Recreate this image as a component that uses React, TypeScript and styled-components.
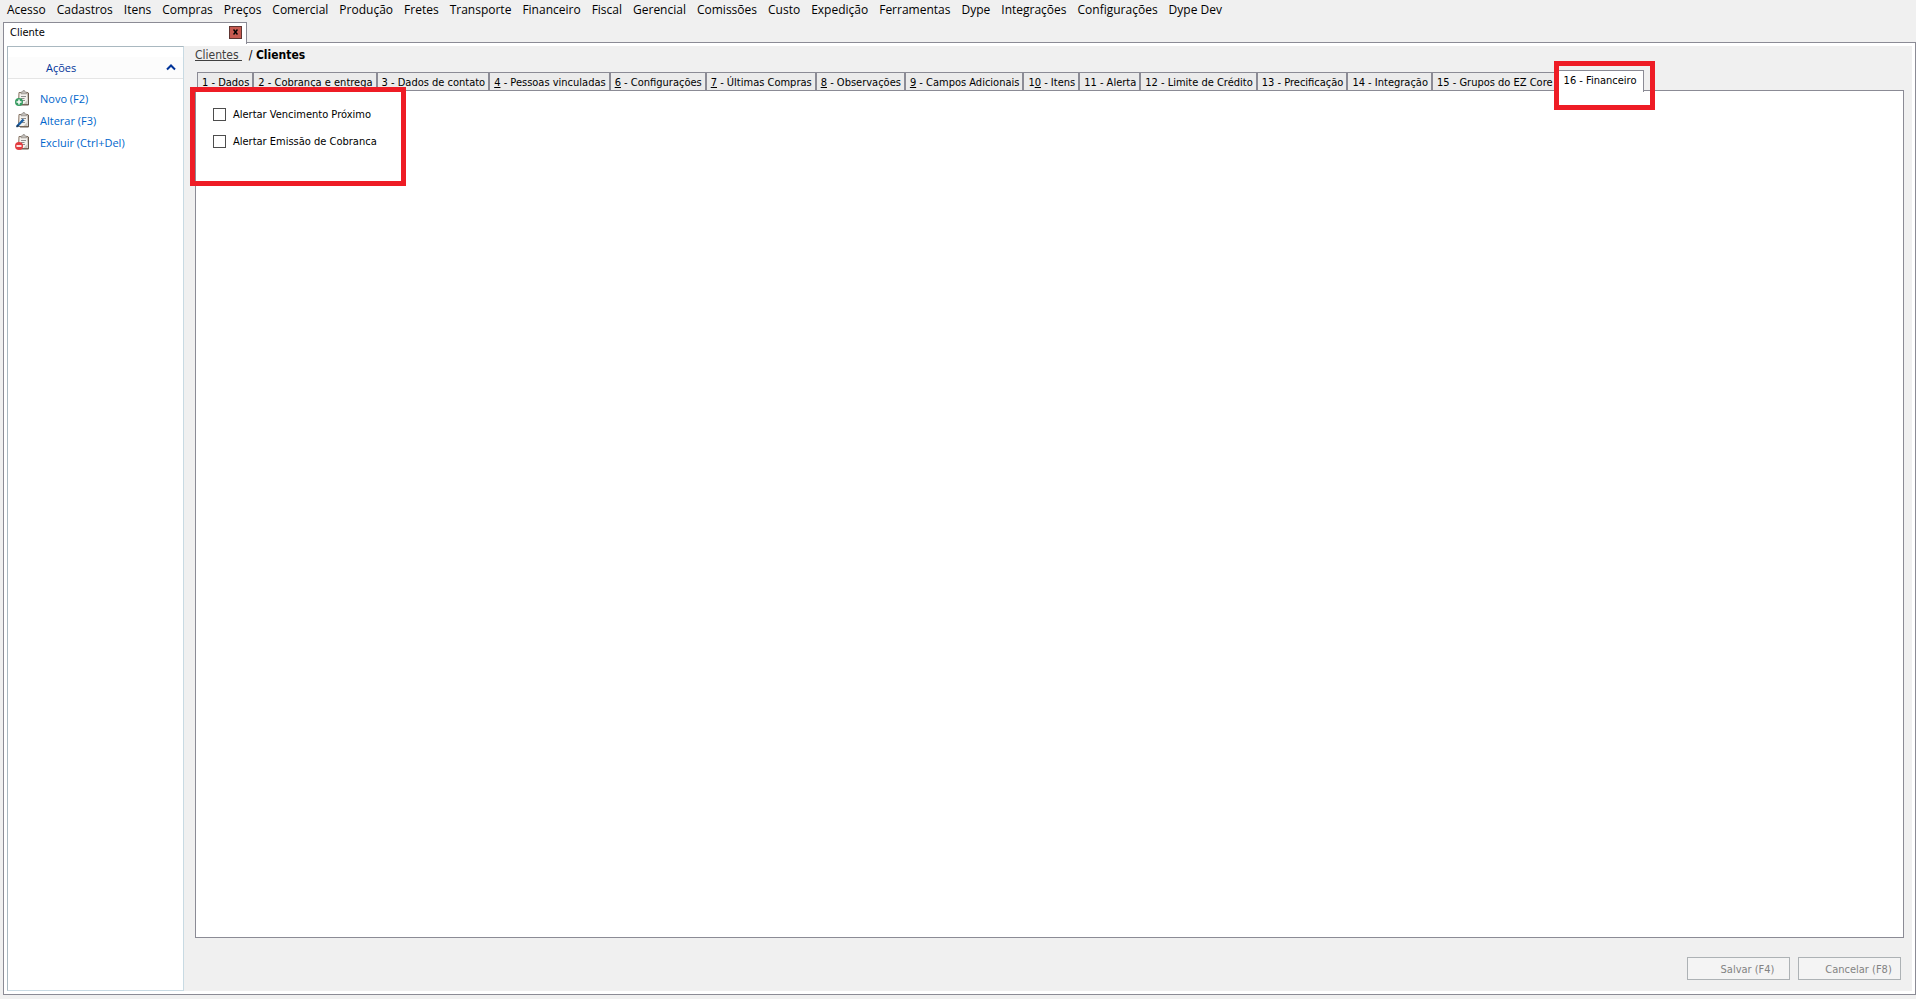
import React from "react";
import styled, { createGlobalStyle, css } from "styled-components";

const line = "#8b8b95";
const face = "#f0f0f0";
const uiFont = `"Open Sans", "Noto Sans", sans-serif`;
const formFont = `"DejaVu Sans Condensed", "DejaVu Sans", sans-serif`;

const GlobalStyle = createGlobalStyle`
  *, *::before, *::after { box-sizing: border-box; }
  body { margin: 0; background: ${face}; color: #000; font: 12px/16px ${uiFont}; }
`;

const Page = styled.div`
  display: flex;
  flex-direction: column;
  min-height: 100vh;
  padding: 0 0 4px 3px;
`;

const MenuBar = styled.nav`
  display: flex;
  align-items: flex-start;
  gap: 11px;
  height: 22px;
  padding: 2px 4px;
  white-space: nowrap;
`;

const MenuItem = styled.button`
  padding: 0;
  border: 0;
  background: none;
  color: inherit;
  font: inherit;
`;

const DocumentTab = styled.div`
  position: relative;
  z-index: 1;
  display: flex;
  align-items: center;
  justify-content: space-between;
  width: 244px;
  height: 22px;
  margin-bottom: -2px;
  padding: 0 4px 3px 6px;
  border: 1px solid ${line};
  border-bottom: 0;
  background: #fff;
  font: 11px/15px ${formFont};
`;

const CloseButton = styled.button`
  display: grid;
  place-items: center;
  width: 13px;
  height: 13px;
  padding: 0;
  border: 1px solid #5f3531;
  background: #c75a50;
`;

const Frame = styled.div`
  flex: 1;
  display: flex;
  padding: 3px;
  border: 1px solid ${line};
  background: #fff;
`;

const Sidebar = styled.aside`
  flex: none;
  width: 177px;
  padding-top: 10px;
  border: 1px solid #c8dae3;
  border-top-color: #a9b8c0;
  border-left-color: #a9b8c0;
  background: #fff;
`;

const GroupHeader = styled.button`
  display: flex;
  align-items: center;
  justify-content: space-between;
  width: 100%;
  height: 22px;
  padding: 0 7px 0 38px;
  border: 0;
  border-bottom: 1px solid #e5e5e5;
  background: #fcfcfc;
  color: #003399;
  font: 11px/16px ${uiFont};
`;

const ActionList = styled.div`
  display: flex;
  flex-direction: column;
  padding: 9px 7px;
`;

const Action = styled.button`
  display: flex;
  align-items: center;
  gap: 9px;
  height: 22px;
  padding: 0;
  border: 0;
  background: none;
  color: #0066cc;
  font: 11px/16px ${uiFont};
`;

const ActionIcon = styled.svg`
  flex: none;
  margin-bottom: 2px;
`;

const Content = styled.main`
  flex: 1;
  display: flex;
  flex-direction: column;
  min-width: 0;
  padding: 1px 8px 11px 11px;
  background: ${face};
  font: 11px/15px ${formFont};
`;

const Breadcrumb = styled.div`
  height: 23px;
  font-size: 12px;
  line-height: 16px;
  white-space: pre;
  a { color: #404040; }
`;

const TabStrip = styled.div`
  position: relative;
  z-index: 1;
  display: flex;
  align-items: flex-end;
  height: 21px;
  margin-bottom: -1px;
  padding-left: 2px;
`;

const Tab = styled.button<{ $active?: boolean }>`
  position: relative;
  flex: none;
  height: 19px;
  padding: 2px 3px 0 4px;
  border: 1px solid ${line};
  background: #ebebeb;
  color: #000;
  font: inherit;
  white-space: nowrap;
  ${(p) =>
    p.$active &&
    css`
      align-self: flex-start;
      height: 22px;
      margin-left: -2px;
      padding: 0 7px 3px 8px;
      border-bottom: 0;
      background: #fff;
    `}
`;

const TabPanel = styled.section`
  position: relative;
  flex: 1;
  display: flex;
  flex-direction: column;
  align-items: flex-start;
  gap: 12px;
  padding: 16px 17px;
  border: 1px solid ${line};
  background: #fff;
`;

const CheckLabel = styled.label`
  display: flex;
  align-items: center;
  gap: 7px;
`;

const CheckBox = styled.input`
  appearance: none;
  width: 13px;
  height: 13px;
  margin: 0;
  border: 1px solid #4d4d4d;
  background: #fff;
  &:checked { background: #4d4d4d; }
`;

const Highlight = styled.span<{ $area: "tab" | "options" }>`
  position: absolute;
  z-index: 2;
  border: 5px solid #ee1c25;
  pointer-events: none;
  ${(p) =>
    p.$area === "tab"
      ? css`inset: -10px -12px -18px -2px;`
      : css`top: -4px; left: -6px; width: 216px; height: 99px;`}
`;

const Footer = styled.footer`
  display: flex;
  justify-content: flex-end;
  gap: 8px;
  padding: 19px 3px 0 0;
`;

const FormButton = styled.button`
  width: 103px;
  height: 23px;
  padding: 1px 0 0 18px;
  border: 1px solid #adb2b5;
  background: #f4f4f4;
  color: #838383;
  font: inherit;
`;

function ClipboardIcon({ badge }: { badge: "add" | "edit" | "remove" }) {
  return (
    <ActionIcon width="16" height="16" viewBox="0 0 16 16" aria-hidden="true">
      <path d="M4 2.500h9l.5 12H3.500z" fill="#f4f2ee" stroke="#84705f" />
      <path d="M13.500 3v12H5" fill="none" stroke="#665a50" />
      <path d="M6 3.800V2h1.500L8 .6h1.500L10 2h1.500v1.800z" fill="#c4c0bb" stroke="#8b8580" strokeWidth="0.7" />
      <path d="M6 6.500h5M6 8.500h3.500M7 10.500h3" stroke="#8f8f8f" />
      <path d="M12.500 10v4h-4z" fill="#c9c6c1" />
      {badge === "add" && (
        <>
          <circle cx="4" cy="12" r="4" fill="#389c62" />
          <path d="M4 9.500v5M1.500 12h5" stroke="#fff" strokeWidth="1.500" />
        </>
      )}
      {badge === "edit" && (
        <>
          <path d="M2 14.500L8.500 7.500" stroke="#1a5fa6" strokeWidth="2.400" />
          <path d="M1.500 15l2-2" stroke="#17395f" strokeWidth="1.500" />
        </>
      )}
      {badge === "remove" && (
        <>
          <circle cx="4" cy="12" r="4" fill="#e23b3f" />
          <path d="M1.500 12h5" stroke="#fff" strokeWidth="1.700" />
        </>
      )}
    </ActionIcon>
  );
}

const menus = [
  "Acesso", "Cadastros", "Itens", "Compras", "Preços", "Comercial", "Produção", "Fretes",
  "Transporte", "Financeiro", "Fiscal", "Gerencial", "Comissões", "Custo", "Expedição",
  "Ferramentas", "Dype", "Integrações", "Configurações", "Dype Dev",
];

const tabs: { before?: string; hotkey?: string; after: string }[] = [
  { after: "1 - Dados" },
  { after: "2 - Cobrança e entrega" },
  { after: "3 - Dados de contato" },
  { hotkey: "4", after: " - Pessoas vinculadas" },
  { hotkey: "6", after: " - Configurações" },
  { hotkey: "7", after: " - Últimas Compras" },
  { hotkey: "8", after: " - Observações" },
  { hotkey: "9", after: " - Campos Adicionais" },
  { before: "1", hotkey: "0", after: " - Itens" },
  { after: "11 - Alerta" },
  { after: "12 - Limite de Crédito" },
  { after: "13 - Precificação" },
  { after: "14 - Integração" },
  { after: "15 - Grupos do EZ Core" },
];

export default function App() {
  return (
    <>
      <GlobalStyle />
      <Page>
        <MenuBar>
          {menus.map((m) => <MenuItem key={m}>{m}</MenuItem>)}
        </MenuBar>
        <DocumentTab>
          Cliente
          <CloseButton aria-label="Fechar">
            <svg width="5" height="6" viewBox="0 0 5 6"><path d="M0.500 0.500l4 5M4.500 0.500l-4 5" stroke="#000" strokeWidth="1.500" /></svg>
          </CloseButton>
        </DocumentTab>
        <Frame>
          <Sidebar>
            <GroupHeader>
              Ações
              <svg width="10" height="7" viewBox="0 0 10 7"><path d="M1 5.500L5 1.500L9 5.500" fill="none" stroke="#003399" strokeWidth="2" /></svg>
            </GroupHeader>
            <ActionList>
              <Action><ClipboardIcon badge="add" />Novo (F2)</Action>
              <Action><ClipboardIcon badge="edit" />Alterar (F3)</Action>
              <Action><ClipboardIcon badge="remove" />Excluir (Ctrl+Del)</Action>
            </ActionList>
          </Sidebar>
          <Content>
            <Breadcrumb><a href="#clientes">Clientes </a>{"  / "}<b>Clientes</b></Breadcrumb>
            <TabStrip role="tablist">
              {tabs.map((t) => (
                <Tab key={t.after} role="tab">{t.before}{t.hotkey && <u>{t.hotkey}</u>}{t.after}</Tab>
              ))}
              <Tab role="tab" aria-selected $active>16 - Financeiro<Highlight $area="tab" /></Tab>
            </TabStrip>
            <TabPanel>
              <CheckLabel><CheckBox type="checkbox" />Alertar Vencimento Próximo</CheckLabel>
              <CheckLabel><CheckBox type="checkbox" />Alertar Emissão de Cobranca</CheckLabel>
              <Highlight $area="options" />
            </TabPanel>
            <Footer>
              <FormButton disabled>Salvar (F4)</FormButton>
              <FormButton disabled>Cancelar (F8)</FormButton>
            </Footer>
          </Content>
        </Frame>
      </Page>
    </>
  );
}
